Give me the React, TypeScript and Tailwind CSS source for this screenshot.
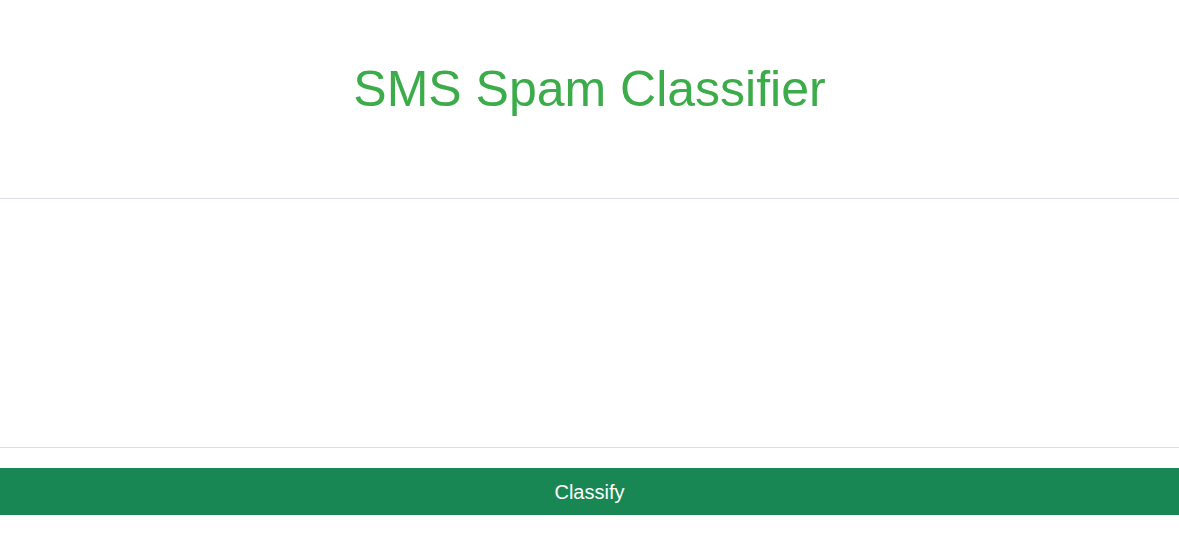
import React, { useState } from 'react';

const App = () => {
  const [message, setMessage] = useState('');

  return (
    <div className="min-h-screen bg-white" style={{ fontFamily: '"Liberation Sans", Arial, sans-serif' }}>
      {/* Header */}
      <div className="h-[198px] pt-[61px] text-center">
        <h1 className="text-[50px] leading-[57px] font-normal text-[#3cac4a]">SMS Spam Classifier</h1>
      </div>

      {/* Message input */}
      <form onSubmit={(e) => e.preventDefault()} className="flex flex-col">
        <textarea
          value={message}
          onChange={(e) => setMessage(e.target.value)}
          className="block h-[250px] w-full resize-none border-y border-t-[#dddbe6] border-b-[#dddddd] bg-white px-3 py-2 text-base outline-none"
        />
        <button
          type="submit"
          className="mt-5 h-[47px] w-full bg-[#198754] pt-[2px] text-[20px] leading-[45px] text-white"
        >
          Classify
        </button>
      </form>
    </div>
  );
};

export default App;
